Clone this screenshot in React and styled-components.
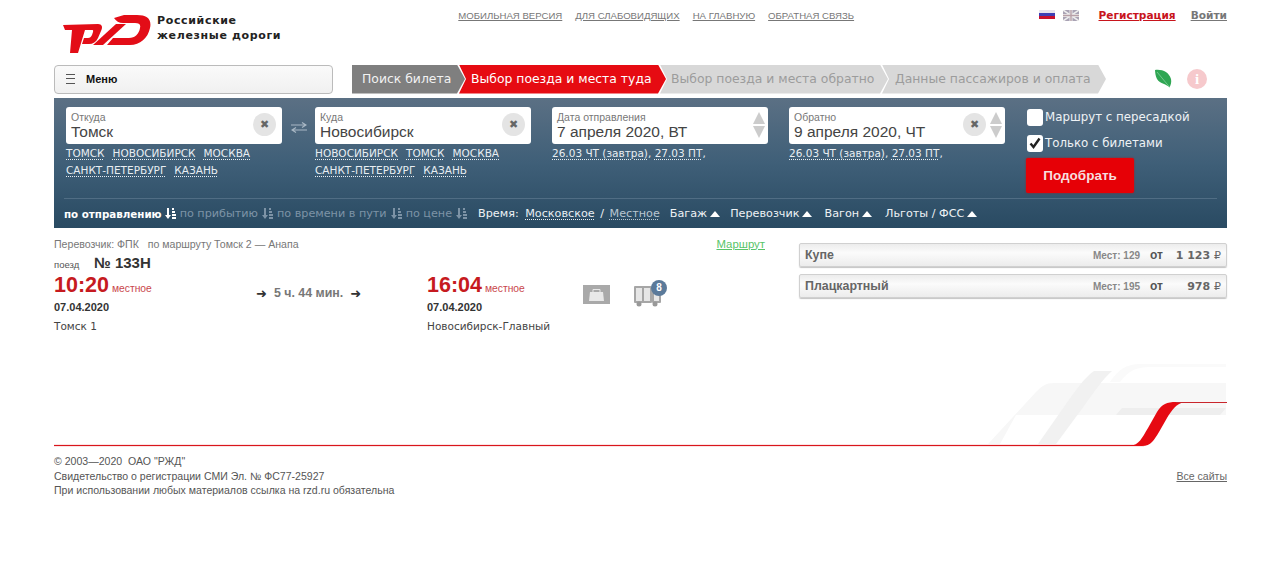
import React from "react";
import styled, { createGlobalStyle } from "styled-components";

const Global = createGlobalStyle`
  html, body { margin: 0; padding: 0; background: #fff; }
  body { font-family: "Liberation Sans", Arial, sans-serif; color: #333; }
  a { color: inherit; }
`;
const Page = styled.div`
  width: 1173px;
  margin-left: 54px;
`;
const Header = styled.header`
  display: flex;
  height: 64px;
`;
const Logo = styled.div`
  display: flex;
  gap: 6px;
  margin: 14px 0 0 9px;
  width: 397px;
  align-items: flex-start;
`;
const LogoText = styled.div`
  font: bold 11px/15px "DejaVu Sans", sans-serif;
  color: #222;
  letter-spacing: 0.65px;
  margin-top: -1px;
`;
const TopLinks = styled.nav`
  display: flex;
  gap: 13px;
  padding-top: 10px;
  width: 581px;
  align-items: flex-start;
`;
const TopLink = styled.a`
  font-size: 9.6px;
  line-height: 11px;
  text-transform: uppercase;
  color: #777;
  text-decoration: underline;
`;
const Lang = styled.div`
  display: flex;
  gap: 8px;
  padding-top: 10px;
  margin-left: 2px;
  width: 60px;
  align-items: flex-start;
`;
const Auth = styled.a`
  font: bold 10.6px/13px "DejaVu Sans", sans-serif;
  margin-top: 9px;
  margin-left: ${p => p.$ml}px;
  color: ${p => p.$red ? "#c8141c" : "#777"};
  text-decoration: underline;
`;
const NavRow = styled.div`
  display: flex;
  align-items: center;
  height: 30px;
  margin-bottom: 4px;
`;
const Menu = styled.div`
  box-sizing: border-box;
  width: 279px;
  height: 29px;
  border: 1px solid #bbb;
  border-radius: 4px;
  background: linear-gradient(#fafafa, #f0f0f0);
  display: flex;
  align-items: center;
  gap: 11px;
  padding-left: 11px;
  font: bold 11px "Liberation Sans", sans-serif;
  color: #111;
`;
const Burger = styled.span`
  width: 9px;
  height: 8px;
  border-top: 1px solid #555;
  border-bottom: 1px solid #555;
  position: relative;
  &::after {
    content: "";
    position: absolute;
    left: 0; right: 0; top: 3px;
    height: 1px;
    background: #555;
  }
`;
const Steps = styled.div`
  display: flex;
  margin-left: 19px;
  height: 29px;
`;
const Step = styled.div`
  box-sizing: border-box;
  height: 29px;
  width: ${p => p.$w}px;
  margin-left: ${p => p.$first ? 0 : -6}px;
  padding-left: ${p => p.$pl}px;
  font: 12.4px/28px "DejaVu Sans", sans-serif;
  white-space: nowrap;
  background: ${p => p.$bg};
  color: ${p => p.$fg};
  clip-path: polygon(${p => p.$first
    ? "0 0, calc(100% - 8px) 0, 100% 50%, calc(100% - 8px) 100%, 0 100%"
    : "0 0, calc(100% - 8px) 0, 100% 50%, calc(100% - 8px) 100%, 0 100%, 7px 50%"});
`;
const Side = styled.div`
  display: flex;
  align-items: center;
  gap: 15px;
  margin-left: 48px;
`;
const Info = styled.span`
  width: 20px;
  height: 20px;
  border-radius: 50%;
  background: #f6c9cc;
  color: #fff;
  font: bold 15px/20px "Liberation Serif", serif;
  text-align: center;
`;
const Panel = styled.section`
  box-sizing: border-box;
  height: 130px;
  padding: 9px 10px 0 12px;
  background: linear-gradient(#5b7084, #3f5f78 50%, #294a62);
  color: #fff;
`;
const Form = styled.div`
  display: flex;
  height: 91px;
`;
const Column = styled.div`
  width: 216px;
  margin-right: ${p => p.$mr}px;
`;
const Field = styled.div`
  box-sizing: border-box;
  height: 37px;
  background: #fff;
  border-radius: 3px;
  padding: 5px 5px 0 5px;
  position: relative;
  color: #333;
`;
const Label = styled.div`
  font-size: 10.5px;
  line-height: 11px;
  color: #777;
`;
const Value = styled.div`
  font-size: 15.5px;
  line-height: 17px;
  color: #444;
`;
const Clear = styled.span`
  position: absolute;
  right: ${p => p.$right}px;
  top: 6px;
  width: 23px;
  height: 23px;
  border-radius: 50%;
  background: #e4e4e4;
  color: #666;
  font: 11px/23px "DejaVu Sans", sans-serif;
  text-align: center;
`;
const Spin = styled.span`
  position: absolute;
  right: 3px;
  top: 5px;
  display: flex;
  flex-direction: column;
  gap: 2px;
`;
const SpinUp = styled.i`
  width: 0; height: 0;
  border-left: 6px solid transparent;
  border-right: 6px solid transparent;
  border-bottom: 12px solid #ccc;
`;
const SpinDown = styled(SpinUp)`
  border-bottom: 0;
  border-top: 12px solid #ccc;
`;
const Quick = styled.div`
  display: flex;
  flex-wrap: wrap;
  gap: 0 8px;
  margin-top: 1px;
  font: 10.5px/17px "DejaVu Sans", sans-serif;
  text-transform: ${p => p.$plain ? "none" : "uppercase"};
`;
const Dotted = styled.a`
  color: ${p => p.$dim ? "#b9c6d1" : "#e8eef3"};
  text-decoration: underline dotted;
  text-underline-offset: 2px;
`;
const QuickPlain = styled.span`
  color: #e8eef3;
`;
const Swap = styled.div`
  width: 33px;
  height: 37px;
  display: flex;
  align-items: center;
  justify-content: center;
  padding-top: 3px;
  box-sizing: border-box;
`;
const Checks = styled.div`
  display: flex;
  flex-direction: column;
  align-items: flex-start;
  padding-top: 1px;
`;
const CheckRow = styled.div`
  display: flex;
  align-items: center;
  gap: 2px;
  height: 18px;
  margin-bottom: 8px;
  font: 11.8px "DejaVu Sans", sans-serif;
  color: #eef2f5;
`;
const Box = styled.span`
  box-sizing: border-box;
  width: 16px;
  height: 17px;
  margin-left: 1px;
  border-radius: 3px;
  background: #fff;
  display: flex;
  align-items: center;
  justify-content: center;
`;
const Submit = styled.button`
  width: 108px;
  height: 35px;
  margin-top: -2px;
  border: 0;
  border-radius: 2px;
  background: #e60006;
  color: #f6dede;
  font: bold 13.5px "Liberation Sans", sans-serif;
  box-shadow: 0 0 2px #b01b1b;
`;
const Filters = styled.div`
  display: flex;
  align-items: center;
  height: 29px;
  margin-left: -2px;
  border-top: 1px solid #506d84;
  font: 11.2px "DejaVu Sans", sans-serif;
  color: #eef2f5;
  white-space: nowrap;
`;
const Sort = styled.span`
  display: inline-flex;
  align-items: center;
  gap: ${p => p.$on ? 3 : 4}px;
  margin-right: 4px;
  font-weight: ${p => p.$on ? "bold" : "normal"};
  font-size: ${p => p.$on ? 10.3 : 11.2}px;
  color: ${p => p.$on ? "#fff" : "#7d93a6"};
`;
const FilterItem = styled.span`
  display: inline-flex;
  align-items: center;
  gap: 3px;
  margin-left: ${p => p.$ml}px;
`;
const Slash = styled.span`
  margin: 0 -1px;
`;
const Up = styled.i`
  width: 0; height: 0;
  border-left: 5px solid transparent;
  border-right: 5px solid transparent;
  border-bottom: 6px solid #fff;
`;
const Results = styled.div`
  display: flex;
  height: 132px;
  padding-top: 4px;
  box-sizing: border-box;
`;
const Train = styled.div`
  width: 711px;
  margin-right: 34px;
`;
const TrainTop = styled.div`
  display: flex;
  justify-content: space-between;
  height: 23px;
  align-items: center;
`;
const Carrier = styled.div`
  font-size: 10.6px;
  color: #777;
  white-space: pre;
`;
const RouteLink = styled.a`
  font-size: 11.4px;
  color: #58c468;
  text-decoration: underline;
`;
const TrainNo = styled.div`
  display: flex;
  align-items: baseline;
  height: 17px;
  margin-top: -1px;
  font: bold 15px/17px "Liberation Sans", sans-serif;
  color: #333;
`;
const NoLabel = styled.span`
  width: 40px;
  font-size: 9.5px;
  font-weight: normal;
  color: #555;
`;
const TrainGrid = styled.div`
  display: flex;
  align-items: flex-start;
  margin-top: 2px;
`;
const Stop = styled.div`
  width: ${p => p.$w}px;
`;
const Time = styled.div`
  display: flex;
  align-items: baseline;
  gap: 3px;
  font: bold 21.5px/24px "Liberation Sans", sans-serif;
  color: #c61a20;
`;
const Local = styled.span`
  font-size: 10.3px;
  font-weight: normal;
  color: #c9474c;
`;
const DateText = styled.div`
  font: bold 11px/14px "Liberation Sans", sans-serif;
  color: #333;
  margin-top: -1px;
`;
const Station = styled.div`
  font: 10.5px/14px "DejaVu Sans", sans-serif;
  color: #444;
  margin-top: 5px;
`;
const Travel = styled.div`
  width: 172px;
  display: flex;
  align-items: center;
  gap: 7px;
  height: 24px;
  margin-top: 8px;
  padding-left: 1px;
  box-sizing: border-box;
  font: bold 12.4px "Liberation Sans", sans-serif;
  color: #777;
`;
const Arrow = styled.span`
  font: bold 13px "DejaVu Sans", sans-serif;
  color: #333;
`;
const Icons = styled.div`
  display: flex;
  align-items: flex-start;
  gap: 24px;
  margin-top: 12px;
`;
const Wagon = styled.div`
  position: relative;
  width: 27px;
  height: 22px;
`;
const Badge = styled.span`
  position: absolute;
  left: 17px;
  top: -5px;
  width: 16px;
  height: 16px;
  border-radius: 50%;
  background: #5b7a9a;
  color: #fff;
  font: bold 10px/16px "Liberation Sans", sans-serif;
  text-align: center;
`;
const Classes = styled.div`
  width: 428px;
  display: flex;
  flex-direction: column;
  gap: 7px;
  padding-top: 11px;
`;
const ClassRow = styled.div`
  box-sizing: border-box;
  height: 24px;
  display: flex;
  align-items: center;
  padding: 0 5px;
  border: 1px solid #d0d0d0;
  border-radius: 2px;
  background: linear-gradient(#ececec, #fbfbfb 40%, #ececec);
  box-shadow: 0 1px 1px #c4c4c4;
  color: #666;
`;
const ClassName = styled.span`
  flex: 1;
  font: bold 12.4px "Liberation Sans", sans-serif;
`;
const Seats = styled.span`
  width: 57px;
  font: bold 10px "Liberation Sans", sans-serif;
  color: #888;
`;
const From = styled.span`
  font: bold 12px "Liberation Sans", sans-serif;
  width: 20px;
  color: #555;
`;
const Price = styled.span`
  width: 51px;
  text-align: right;
  font: bold 11px "DejaVu Sans", sans-serif;
  color: #666;
`;
const Rub = styled.span`
  font-weight: normal;
`;
const Track = styled.svg`
  display: block;
  width: 1173px;
  height: 87px;
`;
const Footer = styled.footer`
  display: flex;
  justify-content: space-between;
  align-items: center;
  padding-top: 7px;
  font-size: 10.55px;
  line-height: 14.5px;
  color: #555;
`;
const AllSites = styled.a`
  text-decoration: underline;
  color: #666;
`;

const LogoMark = () => (
  <svg width="88" height="40" viewBox="0 0 88 40">
    <path fill="#e30d17" d="M0 11 35 10C39 10 40 13 38 17L35 24C33 28 30 30 26 30H19L21 24H25C27 24 28 23 29 21L30 18C30.500 16.500 30 16 29 16H22L15 39H7L9 16H2z" />
    <path fill="#e30d17" d="M30 31 53 10H63L40 31z" />
    <path fill="#e30d17" fillRule="evenodd" d="M51 4 61 1H74C84 1 89 5 87 14 85 24 77 31 67 31H44L50 24H66C72 24 76 20 77 14 78 10 76 9 72 9H60C56 9 53 7 51 4z" />
  </svg>
);
const FlagRu = () => (
  <svg width="16" height="9" viewBox="0 0 16 9">
    <rect width="16" height="3" fill="#e8e4ee" />
    <rect y="3" width="16" height="3" fill="#3f3fb5" />
    <rect y="6" width="16" height="3" fill="#c8102e" />
  </svg>
);
const FlagEn = () => (
  <svg width="16" height="11" viewBox="0 0 16 11">
    <rect width="16" height="11" fill="#a9a2b4" />
    <path d="M0 0 16 11M16 0 0 11" stroke="#eee" strokeWidth="1.6" />
    <path d="M8 0V11M0 5.500H16" stroke="#eee" strokeWidth="3" />
    <path d="M8 0V11M0 5.500H16" stroke="#b8a0a8" strokeWidth="1.400" />
  </svg>
);
const Leaf = () => (
  <svg width="18" height="20" viewBox="0 0 18 20">
    <path fill="#2fa653" d="M1 1c7-1 14 2 16 9 .7 3-.2 6-1.500 8.500C13 15 6 15 3 10 1.500 7 1.200 4 1 1z" />
    <path fill="none" stroke="#8fd6a4" strokeWidth="0.700" d="M3 3 15.500 18" />
  </svg>
);
const SwapIcon = () => (
  <svg width="16" height="11" viewBox="0 0 16 11" fill="none" stroke="#a9b8c5" strokeWidth="1.200">
    <path d="M0 3H14M11 .5 15 3 11 5.500" />
    <path d="M16 8H2M5 5.500 1 8 5 10.500" />
  </svg>
);
const Check = () => (
  <svg width="12" height="12" viewBox="0 0 12 12">
    <path d="M1.500 6.500 4.500 10 10.500 1.500" fill="none" stroke="#222" strokeWidth="2.400" />
  </svg>
);
const SortIcon = ({ color }) => (
  <svg width="11" height="11" viewBox="0 0 11 11" fill={color}>
    <path d="M2 0h2v7h2L3 11 0 7h2zM7 0h2v2H7zM7 3h3v2H7zM7 6h4v2H7zM7 9h4v2H7z" />
  </svg>
);
const Bag = () => (
  <svg width="27" height="19" viewBox="0 0 27 19">
    <rect width="27" height="19" fill="#a9a9a9" />
    <path fill="#e8e8e8" d="M7 7h13l1 9H6z" />
    <path fill="none" stroke="#e8e8e8" d="M10 7V4.500h7V7" />
  </svg>
);
const WagonIcon = () => (
  <svg width="27" height="22" viewBox="0 0 27 22">
    <rect x="0" y="1" width="18" height="17" rx="1" fill="#a6a6a6" />
    <rect x="2" y="3" width="6" height="13" fill="#e6e6e6" />
    <rect x="10" y="3" width="6" height="13" fill="#e6e6e6" />
    <rect x="18" y="6" width="9" height="12" rx="1" fill="#a6a6a6" />
    <rect x="20" y="8" width="5" height="8" fill="#e6e6e6" />
    <circle cx="5" cy="19" r="2.500" fill="#999" />
    <circle cx="21" cy="19" r="2.500" fill="#999" />
  </svg>
);
const TrackArt = () => (
  <Track viewBox="0 0 1173 87">
    <path fill="#fafafa" d="M1086 4H1172V7H1098C1080 7 1074 12 1066 22H1056C1064 10 1072 4 1086 4z" />
    <path fill="#f7f7f7" d="M1000 23H1172V55H962L946 84H934L982 32C988 26 992 23 1000 23z" />
    <path fill="#f1f1f1" d="M1040 11H1058C1048 20 1040 32 1030 46L1002 84H984L1012 44C1022 30 1030 18 1040 11z" />
    <path fill="#eeeeee" d="M1068 48H1172L1166 55H1062z" />
    <rect x="0" y="84" width="1090" height="3" fill="#fbe3e4" />
    <rect x="0" y="85" width="1080" height="1" fill="#d9161c" />
    <path fill="#e60a12" d="M1076 86C1085 85 1088 78 1094 68L1103 52C1108 44 1113 42 1122 42H1130C1122 44 1118 50 1113 58L1105 72C1100 80 1097 86 1088 86z" />
    <rect x="1122" y="42" width="51" height="1" fill="#c9262c" />
  </Track>
);

const topLinks = ["Мобильная версия", "Для слабовидящих", "На главную", "Обратная связь"];

const City = ({ label, value, links, mr }) => (
  <Column $mr={mr}>
    <Field>
      <Label>{label}</Label>
      <Value>{value}</Value>
      <Clear $right={6}>✖</Clear>
    </Field>
    <Quick>
      {links.map(l => <Dotted key={l}>{l}</Dotted>)}
    </Quick>
  </Column>
);
const DateField = ({ label, value, clear, mr }) => (
  <Column $mr={mr}>
    <Field>
      <Label>{label}</Label>
      <Value>{value}</Value>
      {clear && <Clear $right={19}>✖</Clear>}
      <Spin><SpinUp /><SpinDown /></Spin>
    </Field>
    <Quick $plain>
      <span><Dotted>26.03 ЧТ (завтра)</Dotted><QuickPlain>, </QuickPlain><Dotted>27.03 ПТ</Dotted><QuickPlain>,</QuickPlain></span>
    </Quick>
  </Column>
);
const Stops = ({ time, date, name, w }) => (
  <Stop $w={w}>
    <Time>{time}<Local>местное</Local></Time>
    <DateText>{date}</DateText>
    <Station>{name}</Station>
  </Stop>
);

export default function App() {
  return (
    <Page>
      <Global />
      <Header>
        <Logo>
          <LogoMark />
          <LogoText>Российские<br />железные дороги</LogoText>
        </Logo>
        <TopLinks>
          {topLinks.map(l => <TopLink key={l}>{l}</TopLink>)}
        </TopLinks>
        <Lang><FlagRu /><FlagEn /></Lang>
        <Auth $red $ml={0}>Регистрация</Auth>
        <Auth $ml={15}>Войти</Auth>
      </Header>
      <NavRow>
        <Menu><Burger />Меню</Menu>
        <Steps>
          <Step $first $w={113} $pl={10} $bg="#7f7f7f" $fg="#f2f2f2">Поиск билета</Step>
          <Step $w={207} $pl={12} $bg="#e60b12" $fg="#fff">Выбор поезда и места туда</Step>
          <Step $w={228} $pl={11} $bg="#d8d8d8" $fg="#9c9c9c">Выбор поезда и места обратно</Step>
          <Step $w={224} $pl={13} $bg="#d8d8d8" $fg="#9c9c9c">Данные пассажиров и оплата</Step>
        </Steps>
        <Side><Leaf /><Info>i</Info></Side>
      </NavRow>
      <Panel>
        <Form>
          <City label="Откуда" value="Томск" links={["Томск", "Новосибирск", "Москва", "Санкт-Петербург", "Казань"]} mr={0} />
          <Swap><SwapIcon /></Swap>
          <City label="Куда" value="Новосибирск" links={["Новосибирск", "Томск", "Москва", "Санкт-Петербург", "Казань"]} mr={21} />
          <DateField label="Дата отправления" value="7 апреля 2020, ВТ" mr={21} />
          <DateField label="Обратно" value="9 апреля 2020, ЧТ" clear mr={21} />
          <Checks>
            <CheckRow><Box />Маршрут с пересадкой</CheckRow>
            <CheckRow><Box><Check /></Box>Только с билетами</CheckRow>
            <Submit>Подобрать</Submit>
          </Checks>
        </Form>
        <Filters>
          <Sort $on>по отправлению <SortIcon color="#fff" /></Sort>
          <Sort>по прибытию <SortIcon color="#7d93a6" /></Sort>
          <Sort>по времени в пути <SortIcon color="#7d93a6" /></Sort>
          <Sort>по цене <SortIcon color="#7d93a6" /></Sort>
          <FilterItem $ml={7}>Время:&nbsp;<Dotted>Московское</Dotted><Slash>&nbsp;/&nbsp;</Slash><Dotted $dim>Местное</Dotted></FilterItem>
          <FilterItem $ml={10}>Багаж<Up /></FilterItem>
          <FilterItem $ml={10}>Перевозчик<Up /></FilterItem>
          <FilterItem $ml={12}>Вагон<Up /></FilterItem>
          <FilterItem $ml={13}>Льготы / ФСС<Up /></FilterItem>
        </Filters>
      </Panel>
      <Results>
        <Train>
          <TrainTop>
            <Carrier>Перевозчик: ФПК   по маршруту Томск 2 — Анапа</Carrier>
            <RouteLink>Маршрут</RouteLink>
          </TrainTop>
          <TrainNo><NoLabel>поезд</NoLabel>№ 133Н</TrainNo>
          <TrainGrid>
            <Stops w={201} time="10:20" date="07.04.2020" name="Томск 1" />
            <Travel><Arrow>➜</Arrow>5 ч. 44 мин.<Arrow>➜</Arrow></Travel>
            <Stops w={156} time="16:04" date="07.04.2020" name="Новосибирск-Главный" />
            <Icons>
              <Bag />
              <Wagon><WagonIcon /><Badge>8</Badge></Wagon>
            </Icons>
          </TrainGrid>
        </Train>
        <Classes>
          <ClassRow><ClassName>Купе</ClassName><Seats>Мест: 129</Seats><From>от</From><Price>1 123 <Rub>₽</Rub></Price></ClassRow>
          <ClassRow><ClassName>Плацкартный</ClassName><Seats>Мест: 195</Seats><From>от</From><Price>978 <Rub>₽</Rub></Price></ClassRow>
        </Classes>
      </Results>
      <TrackArt />
      <Footer>
        <div>
          © 2003—2020 &nbsp;ОАО "РЖД"<br />
          Свидетельство о регистрации СМИ Эл. № ФС77-25927<br />
          При использовании любых материалов ссылка на rzd.ru обязательна
        </div>
        <AllSites>Все сайты</AllSites>
      </Footer>
    </Page>
  );
}
